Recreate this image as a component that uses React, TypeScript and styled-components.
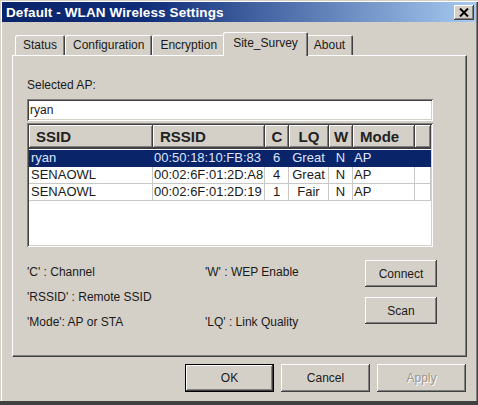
import React from "react";
import styled, { createGlobalStyle, css } from "styled-components";

const GlobalStyle = createGlobalStyle`
  html, body {
    margin: 0;
    padding: 0;
    background: #d4d0c8;
  }
  body {
    font-family: "Liberation Sans", Arial, sans-serif;
    color: #1a1a1a;
  }
`;

type Row = {
  ssid: string;
  rssid: string;
  channel: string;
  lq: string;
  wep: string;
  mode: string;
  selected?: boolean;
};

const rows: Row[] = [
  { ssid: "ryan", rssid: "00:50:18:10:FB:83", channel: "6", lq: "Great", wep: "N", mode: "AP", selected: true },
  { ssid: "SENAOWL", rssid: "00:02:6F:01:2D:A8", channel: "4", lq: "Great", wep: "N", mode: "AP" },
  { ssid: "SENAOWL", rssid: "00:02:6F:01:2D:19", channel: "1", lq: "Fair", wep: "N", mode: "AP" },
];

const columns = [
  { title: "SSID", center: false },
  { title: "RSSID", center: false },
  { title: "C", center: true },
  { title: "LQ", center: true },
  { title: "W", center: true },
  { title: "Mode", center: false },
  { title: "", center: false },
];

const tabs = ["Status", "Configuration", "Encryption", "Site_Survey", "About"];

const raised = css`
  background: #d4d0c8;
  box-shadow: inset -1px -1px #404040, inset 1px 1px #ffffff,
    inset -2px -2px #808080, inset 2px 2px #d4d0c8;
`;

const sunken = css`
  box-shadow: inset 1px 1px #808080, inset -1px -1px #ffffff,
    inset 2px 2px #404040, inset -2px -2px #d4d0c8;
`;

export default function App() {
  return (
    <>
      <GlobalStyle />
      <Window>
        <TitleBar>
          <Title>Default - WLAN Wireless Settings</Title>
          <CloseButton aria-label="Close">
            <svg width="10" height="9" viewBox="0 0 10 9">
              <path d="M1 0.5 L9 8.5 M9 0.5 L1 8.5" stroke="#000" strokeWidth="2" />
            </svg>
          </CloseButton>
        </TitleBar>

        <TabStrip>
          {tabs.map((t) => (
            <Tab key={t} $active={t === "Site_Survey"}>
              {t}
            </Tab>
          ))}
        </TabStrip>

        <Panel>
          <Label>Selected AP:</Label>
          <TextBox>ryan</TextBox>

          <ListView>
            <HeaderRow>
              {columns.map((c, i) => (
                <HeaderCell key={i} $center={c.center}>
                  {c.title}
                </HeaderCell>
              ))}
            </HeaderRow>
            {rows.map((r, i) => (
              <DataRow key={i} $selected={r.selected}>
                <Cell $selected={r.selected}>{r.ssid}</Cell>
                <Cell $selected={r.selected} $tight>
                  {r.rssid}
                </Cell>
                <Cell $selected={r.selected} $center>
                  {r.channel}
                </Cell>
                <Cell $selected={r.selected} $center>
                  {r.lq}
                </Cell>
                <Cell $selected={r.selected} $center>
                  {r.wep}
                </Cell>
                <Cell $selected={r.selected} $tight>
                  {r.mode}
                </Cell>
                <Cell $selected={r.selected} />
              </DataRow>
            ))}
          </ListView>

          <BottomSection>
            <Legend>
              <LegendItem>'C' : Channel</LegendItem>
              <LegendItem>'W' : WEP Enable</LegendItem>
              <LegendItem>'RSSID' : Remote SSID</LegendItem>
              <LegendItem />
              <LegendItem>'Mode': AP or STA</LegendItem>
              <LegendItem>'LQ' : Link Quality</LegendItem>
            </Legend>
            <SideButtons>
              <Button $w={72} $h={27}>Connect</Button>
              <Button $w={72} $h={27}>Scan</Button>
            </SideButtons>
          </BottomSection>
        </Panel>

        <Footer>
          <Button $w={89} $h={28} $default>
            OK
          </Button>
          <Button $w={89} $h={28}>Cancel</Button>
          <Button $w={89} $h={28} disabled>
            Apply
          </Button>
        </Footer>
      </Window>
    </>
  );
}

const Window = styled.div`
  width: 478px;
  height: 405px;
  box-sizing: border-box;
  padding: 2px 2px 0 2px;
  background: #d4d0c8;
  border-bottom: 4px solid #404040;
  box-shadow: inset 1px 1px #d4d0c8, inset 2px 2px #ffffff,
    inset -1px 0 #404040, inset -2px 0 #808080;
  display: flex;
  flex-direction: column;
`;

const TitleBar = styled.div`
  height: 20px;
  display: flex;
  align-items: center;
  justify-content: space-between;
  padding: 0 2px 0 4px;
  background: linear-gradient(90deg, #0a246a 0%, #0e2c78 30%, #a6caf0 100%);
`;

const Title = styled.span`
  color: #ffffff;
  font-weight: bold;
  font-size: 13.5px;
  letter-spacing: 0.1px;
`;

const CloseButton = styled.button`
  ${raised};
  width: 20px;
  height: 15px;
  border: none;
  padding: 0;
  display: flex;
  align-items: center;
  justify-content: center;
`;

const TabStrip = styled.div`
  display: flex;
  align-items: flex-end;
  height: 23px;
  margin-top: 10px;
  padding-left: 13px;
  position: relative;
  z-index: 1;
`;

const Tab = styled.div<{ $active?: boolean }>`
  height: 20px;
  box-sizing: border-box;
  padding: 0 8px;
  display: flex;
  align-items: center;
  font-size: 12px;
  background: #d4d0c8;
  border-radius: 2px 2px 0 0;
  box-shadow: inset 1px 1px #ffffff, inset -1px 0 #404040, inset -2px 0 #808080;

  ${(p) =>
    p.$active &&
    css`
      height: 24px;
      margin: 0 -2px -1px;
      padding: 0 10px 3px;
      position: relative;
      z-index: 2;
    `}
`;

const Panel = styled.div`
  width: 455px;
  height: 302px;
  box-sizing: border-box;
  margin-left: 10px;
  padding: 21px 14px 0;
  border-style: solid;
  border-width: 1px;
  border-color: #ffffff #404040 #404040 #ffffff;
  box-shadow: inset -1px -1px #808080;
  display: flex;
  flex-direction: column;
`;

const Label = styled.div`
  font-size: 12px;
  line-height: 16px;
`;

const TextBox = styled.div`
  ${sunken};
  margin-top: 6px;
  width: 406px;
  height: 22px;
  box-sizing: border-box;
  padding: 0 3px;
  background: #ffffff;
  font-size: 12px;
  line-height: 22px;
`;

const ListView = styled.div`
  ${sunken};
  margin-top: 2px;
  width: 406px;
  height: 124px;
  box-sizing: border-box;
  padding: 2px;
  background: #ffffff;
  display: flex;
  flex-direction: column;
`;

const gridCols = css`
  display: grid;
  grid-template-columns: 124px 112px 24px 40px 24px 62px 1fr;
`;

const HeaderRow = styled.div`
  ${gridCols};
  height: 23px;
  border-bottom: 1px solid #404040;
`;

const HeaderCell = styled.div<{ $center?: boolean }>`
  ${raised};
  font-weight: bold;
  font-size: 15px;
  color: #222;
  display: flex;
  align-items: center;
  justify-content: ${(p) => (p.$center ? "center" : "flex-start")};
  padding: 0 ${(p) => (p.$center ? "0" : "7px")};
  overflow: hidden;
  white-space: nowrap;
`;

const DataRow = styled.div<{ $selected?: boolean }>`
  ${gridCols};
  height: 17px;
  box-sizing: border-box;
  margin-top: ${(p) => (p.$selected ? "1px" : "0")};
  border-bottom: 1px solid ${(p) => (p.$selected ? "#0a246a" : "#c8c8c8")};
  background: ${(p) => (p.$selected ? "#0a246a" : "#ffffff")};
`;

const Cell = styled.div<{ $selected?: boolean; $center?: boolean; $tight?: boolean }>`
  font-size: 13px;
  line-height: 16px;
  white-space: nowrap;
  overflow: hidden;
  color: ${(p) => (p.$selected ? "#dfe6ff" : "#1a1a1a")};
  border-right: 1px solid ${(p) => (p.$selected ? "#0a246a" : "#c8c8c8")};
  text-align: ${(p) => (p.$center ? "center" : "left")};
  padding-left: ${(p) => (p.$center ? "0" : p.$tight ? "1px" : "2px")};
`;

const BottomSection = styled.div`
  display: flex;
  margin-top: 12px;
`;

const Legend = styled.div`
  width: 338px;
  display: grid;
  grid-template-columns: 178px 1fr;
  grid-auto-rows: 25px;
`;

const LegendItem = styled.div`
  font-size: 12px;
  display: flex;
  align-items: center;
`;

const SideButtons = styled.div`
  display: flex;
  flex-direction: column;
  gap: 10px;
  margin-top: 1px;
`;

const Button = styled.button<{ $w: number; $h: number; $default?: boolean }>`
  ${raised};
  width: ${(p) => p.$w}px;
  height: ${(p) => p.$h}px;
  border: none;
  padding: 0;
  font-family: "Liberation Sans", Arial, sans-serif;
  font-size: 12px;
  color: #1a1a1a;

  ${(p) =>
    p.$default &&
    css`
      box-shadow: inset 0 0 0 1px #000000, inset -2px -2px #404040,
        inset 2px 2px #ffffff, inset -3px -3px #808080;
    `}

  &:disabled {
    color: #9a968e;
    text-shadow: 1px 1px #ffffff;
  }
`;

const Footer = styled.div`
  display: flex;
  justify-content: flex-end;
  gap: 7px;
  margin-top: 7px;
  padding-right: 10px;
`;
